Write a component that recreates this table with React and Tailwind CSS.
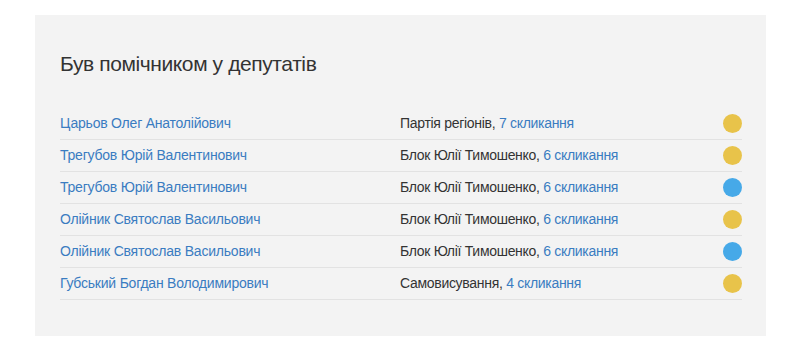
import React from 'react';

const rows = [
    { name: 'Царьов Олег Анатолійович', party: 'Партія регіонів', term: '7 скликання', color: 'bg-[#e8c34a]' },
    { name: 'Трегубов Юрій Валентинович', party: 'Блок Юлії Тимошенко', term: '6 скликання', color: 'bg-[#e8c34a]' },
    { name: 'Трегубов Юрій Валентинович', party: 'Блок Юлії Тимошенко', term: '6 скликання', color: 'bg-[#46a9e8]' },
    { name: 'Олійник Святослав Васильович', party: 'Блок Юлії Тимошенко', term: '6 скликання', color: 'bg-[#e8c34a]' },
    { name: 'Олійник Святослав Васильович', party: 'Блок Юлії Тимошенко', term: '6 скликання', color: 'bg-[#46a9e8]' },
    { name: 'Губський Богдан Володимирович', party: 'Самовисування', term: '4 скликання', color: 'bg-[#e8c34a]' },
];

const App = () => {
    return (
        <div className="w-[800px] h-[356px] bg-white pt-[15px] pl-[35px] font-['Liberation_Sans',Arial,sans-serif]">
            <div className="w-[731px] h-[321px] bg-[#f3f3f3] pt-[36px] px-[25px]">
                <h2 className="text-[21px] leading-[26px] text-[#333] tracking-[-0.4px] mb-[31px]">Був помічником у депутатів</h2>

                {/* Deputies list */}
                <div className="w-[682px]">
                    {rows.map((row, i) => (
                        <div key={i} className="flex items-center h-[32px] border-b border-[#e2e2e2] text-[14px]">
                            <a className="w-[340px] text-[#3a7cc1] tracking-[-0.22px]">{row.name}</a>
                            <div className="flex-1 text-[#333] tracking-[-0.3px]">
                                {row.party}, <a className="text-[#3a7cc1]">{row.term}</a>
                            </div>
                            <span className={`w-[19px] h-[19px] rounded-full ${row.color}`}></span>
                        </div>
                    ))}
                </div>
            </div>
        </div>
    );
};

export default App;
